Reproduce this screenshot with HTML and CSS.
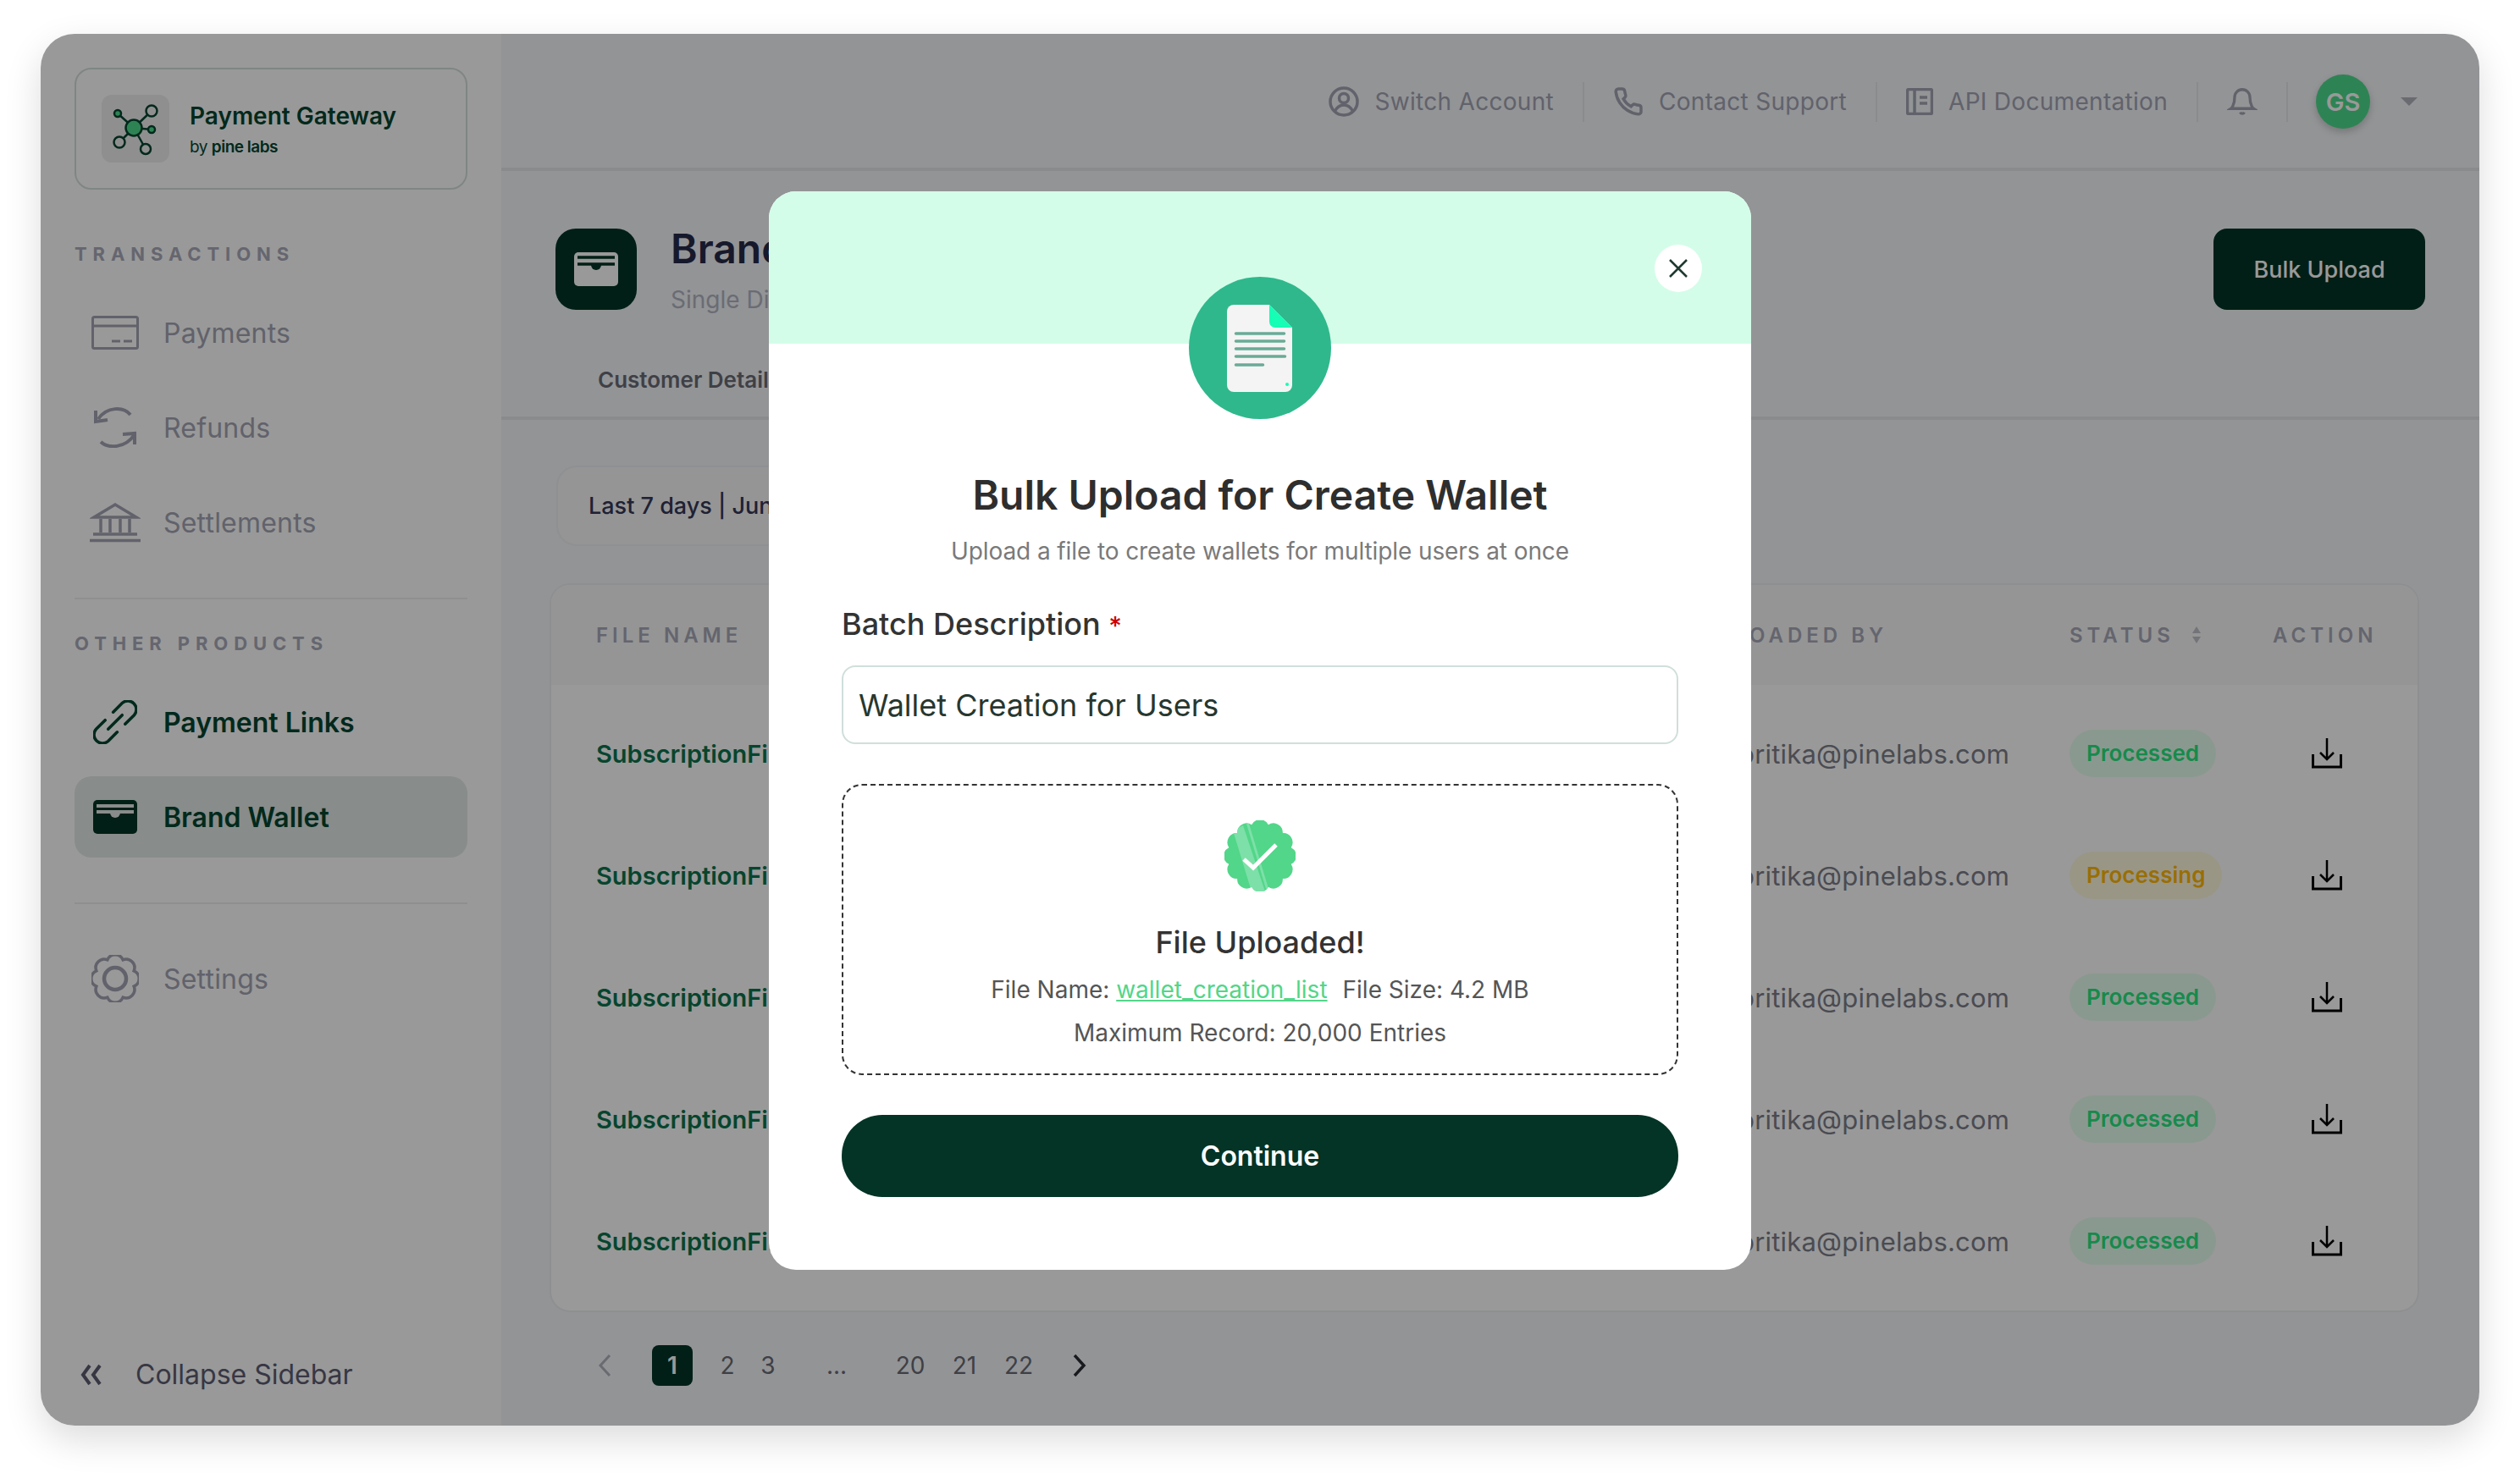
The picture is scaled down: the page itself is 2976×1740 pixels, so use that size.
FILE: index.html
```html
<!DOCTYPE html>
<html lang="en">
<head>
  <meta charset="UTF-8">
  <title>Brand Wallet - Payment Gateway</title>
  <link rel="stylesheet" href="styles.css">
</head>
<body>
  <div class="frame">
    <aside class="sidebar">
      <div class="logo-card">
        <div class="logo-box">
          <svg width="80" height="80" viewBox="0 0 80 80" fill="none" stroke="#034530" stroke-width="2.5">
            <path d="M38 39 19 22M38 39 59 19M38 39 59 41M38 39 21 56M38 39 52 64" />
            <circle cx="38" cy="39" r="9.5" fill="#4eda8c" />
            <circle cx="19" cy="22" r="4" fill="#4eda8c" />
            <circle cx="59" cy="19" r="6.5" fill="#eee" />
            <circle cx="59" cy="41" r="4" fill="#4eda8c" />
            <circle cx="21" cy="56" r="6.5" fill="#eee" />
            <circle cx="52" cy="64" r="6" fill="#eee" />
          </svg>
        </div>
        <div>
          <div class="logo-title">Payment Gateway</div>
          <div class="logo-sub">by <b>pine labs</b></div>
        </div>
      </div>

      <div class="nav-label nav-label-first">TRANSACTIONS</div>
      <a class="nav-item">
        <span class="nav-icon">
          <svg width="56" height="40" viewBox="0 0 56 40" fill="none" stroke="currentColor" stroke-width="3">
            <rect x="1.5" y="1.5" width="53" height="37" rx="2" />
            <path d="M2 12h52" />
            <path d="M24 30h10M38 30h10" />
          </svg>
        </span>
        Payments
      </a>
      <a class="nav-item">
        <span class="nav-icon">
          <svg width="52" height="48" viewBox="0 0 52 48" fill="none" stroke="currentColor" stroke-width="4">
            <path d="M44 9C36-1 16-1 6 14" />
            <path d="M3 4v13l14-2" />
            <path d="M9 41c9 8 29 8 40-9" />
            <path d="M49 44V31l-14 1" />
          </svg>
        </span>
        Refunds
      </a>
      <a class="nav-item">
        <span class="nav-icon">
          <svg width="60" height="48" viewBox="0 0 60 48" fill="none" stroke="currentColor" stroke-width="3.5">
            <path d="M5 18 30 3l25 15z" />
            <path d="M13 20v16M24 20v16M36 20v16M47 20v16" />
            <path d="M4 38h52" />
            <path d="M0 45.5h60" />
          </svg>
        </span>
        Settlements
      </a>

      <div class="nav-line"></div>

      <div class="nav-label">OTHER PRODUCTS</div>
      <a class="nav-item nav-item-dark">
        <span class="nav-icon">
          <svg width="52" height="52" viewBox="4 4 44 44" fill="none" stroke="currentColor" stroke-width="3" stroke-linecap="round">
            <path d="M19 33 33 19" />
            <path d="M24 16 33 7a8.5 8.5 0 0 1 12 12L36 28" />
            <path d="M28 36 19 45A8.5 8.5 0 0 1 7 33l9-9" />
          </svg>
        </span>
        Payment Links
      </a>
      <a class="nav-item nav-item-dark nav-item-active">
        <span class="nav-icon">
          <svg width="52" height="40" viewBox="0 0 52 40">
            <rect width="52" height="40" rx="5" fill="#033426" />
            <path d="M4 7h44M4 14h44" fill="none" stroke="#e3eae6" stroke-width="4" />
            <path d="M20 15a6 6 0 0 0 12 0z" fill="#e3eae6" />
          </svg>
        </span>
        Brand Wallet
      </a>

      <div class="nav-line nav-line-second"></div>

      <a class="nav-item">
        <span class="nav-icon">
          <svg width="56" height="56" viewBox="0 0 56 56" fill="none" stroke="currentColor" stroke-width="3.5">
            <path d="M50.17 37.18A10 10 0 0 1 37.18 50.17 10 10 0 0 1 18.82 50.17 10 10 0 0 1 5.83 37.18 10 10 0 0 1 5.83 18.82 10 10 0 0 1 18.82 5.83 10 10 0 0 1 37.18 5.83 10 10 0 0 1 50.17 18.82 10 10 0 0 1 50.17 37.18z" />
            <circle cx="28" cy="28" r="13" stroke-width="4.5" />
          </svg>
        </span>
        Settings
      </a>

      <div class="collapse">
        <svg width="26" height="26" viewBox="0 0 26 26" fill="none" stroke="currentColor" stroke-width="4">
          <path d="M12 2 4 13l8 11M24 2l-8 11 8 11" />
        </svg>
        Collapse Sidebar
      </div>
    </aside>

    <main class="main">
      <header class="topbar">
        <div class="top-item">
          <svg width="36" height="36" viewBox="0 0 36 36" fill="none" stroke="currentColor" stroke-width="3.5">
            <circle cx="18" cy="18" r="16" />
            <circle cx="18" cy="14" r="5.5" />
            <path d="M7 30c3-6 7-8 11-8s8 2 11 8" />
          </svg>
          Switch Account
        </div>
        <div class="top-item">
          <svg width="36" height="36" viewBox="0 0 24 24" fill="none" stroke="currentColor" stroke-width="2.3">
            <path d="M22 16.92v3a2 2 0 0 1-2.18 2 19.79 19.79 0 0 1-8.63-3.07 19.5 19.5 0 0 1-6-6 19.79 19.79 0 0 1-3.07-8.67A2 2 0 0 1 4.11 2h3a2 2 0 0 1 2 1.72 12.84 12.84 0 0 0 .7 2.81 2 2 0 0 1-.45 2.11L8.09 9.91a16 16 0 0 0 6 6l1.27-1.27a2 2 0 0 1 2.11-.45 12.84 12.84 0 0 0 2.81.7A2 2 0 0 1 22 16.92z" />
          </svg>
          Contact Support
        </div>
        <div class="top-item">
          <svg width="32" height="32" viewBox="0 0 32 32" fill="none" stroke="currentColor" stroke-width="3.5">
            <rect x="1.5" y="1.5" width="29" height="29" rx="2" />
            <path d="M10 2v28" />
            <path d="M16 11h9M16 18h9" />
          </svg>
          API Documentation
        </div>
        <div class="top-item">
          <svg width="36" height="38" viewBox="0 0 24 25" fill="none" stroke="currentColor" stroke-width="2.2">
            <path d="M18 9A6 6 0 0 0 6 9c0 7-3 9-3 9h18s-3-2-3-9" />
            <path d="M13.7 21a2 2 0 0 1-3.4 0" />
          </svg>
        </div>
        <div class="top-user">
          <div class="avatar">GS</div>
          <span class="caret"></span>
        </div>
      </header>

      <section class="page-head">
        <div class="head-icon">
          <svg width="52" height="40" viewBox="0 0 52 40">
            <rect width="52" height="40" rx="5" fill="#fff" />
            <path d="M4 6h44M4 14h44" fill="none" stroke="#033426" stroke-width="3.5" />
            <path d="M20 15a6 6 0 0 0 12 0z" fill="#033426" />
          </svg>
        </div>
        <div class="head-text">
          <h1>Brand Wallet</h1>
          <p>Single Disbursement</p>
        </div>
        <button class="bulk-btn">Bulk Upload</button>
      </section>

      <nav class="tabs"><span class="tab">Customer Details</span></nav>

      <div class="filter">Last 7 days | Jun 1 - Jun 7</div>

      <div class="table">
        <div class="table-row table-head">
          <div>FILE NAME</div>
          <div>UPLOADED BY</div>
          <div class="status-head">STATUS
            <svg width="12" height="22" viewBox="0 0 12 22" fill="#c0c2cc"><path d="M6 1l5 8H1zM6 21l-5-8h10z" /></svg>
          </div>
          <div>ACTION</div>
        </div>
        <div class="table-body">
          <div class="table-row">
            <div class="file-name">SubscriptionFile_01.csv</div>
            <div class="email">pritika@pinelabs.com</div>
            <div><span class="pill">Processed</span></div>
            <div class="action"><svg width="36" height="36" viewBox="0 0 36 36" fill="none" stroke="#000" stroke-width="2.5"><path d="M18 0v25M10 17l8 8 8-8" /><path d="M1.5 19v15h33V19" stroke-width="3" /></svg></div>
          </div>
          <div class="table-row">
            <div class="file-name">SubscriptionFile_02.csv</div>
            <div class="email">pritika@pinelabs.com</div>
            <div><span class="pill pill-wait">Processing</span></div>
            <div class="action"><svg width="36" height="36" viewBox="0 0 36 36" fill="none" stroke="#000" stroke-width="2.5"><path d="M18 0v25M10 17l8 8 8-8" /><path d="M1.5 19v15h33V19" stroke-width="3" /></svg></div>
          </div>
          <div class="table-row">
            <div class="file-name">SubscriptionFile_03.csv</div>
            <div class="email">pritika@pinelabs.com</div>
            <div><span class="pill">Processed</span></div>
            <div class="action"><svg width="36" height="36" viewBox="0 0 36 36" fill="none" stroke="#000" stroke-width="2.5"><path d="M18 0v25M10 17l8 8 8-8" /><path d="M1.5 19v15h33V19" stroke-width="3" /></svg></div>
          </div>
          <div class="table-row">
            <div class="file-name">SubscriptionFile_04.csv</div>
            <div class="email">pritika@pinelabs.com</div>
            <div><span class="pill">Processed</span></div>
            <div class="action"><svg width="36" height="36" viewBox="0 0 36 36" fill="none" stroke="#000" stroke-width="2.5"><path d="M18 0v25M10 17l8 8 8-8" /><path d="M1.5 19v15h33V19" stroke-width="3" /></svg></div>
          </div>
          <div class="table-row">
            <div class="file-name">SubscriptionFile_05.csv</div>
            <div class="email">pritika@pinelabs.com</div>
            <div><span class="pill">Processed</span></div>
            <div class="action"><svg width="36" height="36" viewBox="0 0 36 36" fill="none" stroke="#000" stroke-width="2.5"><path d="M18 0v25M10 17l8 8 8-8" /><path d="M1.5 19v15h33V19" stroke-width="3" /></svg></div>
          </div>
        </div>
      </div>

      <div class="pager">
        <svg class="pager-prev" width="16" height="28" viewBox="0 0 16 28" fill="none" stroke="#b0b2bd" stroke-width="3"><path d="M14 2 3 14l11 12" /></svg>
        <span class="page page-on">1</span>
        <span class="page page-two">2</span>
        <span class="page">3</span>
        <span class="page page-dots">...</span>
        <span class="page page-twenty">20</span>
        <span class="page page-far">21</span>
        <span class="page page-far">22</span>
        <svg class="pager-next" width="16" height="28" viewBox="0 0 16 28" fill="none" stroke="#2a2b33" stroke-width="3.5"><path d="M2 2l11 12L2 26" /></svg>
      </div>
    </main>

    <div class="overlay"></div>

    <div class="modal">
      <div class="modal-band">
        <button class="modal-close">
          <svg width="24" height="24" viewBox="0 0 24 24" fill="none" stroke="#1f3a30" stroke-width="2.5"><path d="M2 2l20 20M22 2 2 22" /></svg>
        </button>
      </div>
      <div class="modal-body">
        <div class="doc-circle">
          <svg width="78" height="103" viewBox="0 0 78 103">
            <path d="M8 0h42l27 27v68a8 8 0 0 1-8 8H8a8 8 0 0 1-8-8V8a8 8 0 0 1 8-8z" fill="#f4f4f4" />
            <path d="M50 0l27 27H57a7 7 0 0 1-7-7z" fill="#16fdb5" />
            <path d="M10.5 34h57M10.5 43h57M10.5 52h57M10.5 61h58M10.5 71h32" fill="none" stroke="#6aab96" stroke-width="3.5" stroke-linecap="round" />
            <circle cx="71" cy="94" r="2" fill="#16fdb5" />
          </svg>
        </div>
        <h2 class="modal-title">Bulk Upload for Create Wallet</h2>
        <p class="modal-sub">Upload a file to create wallets for multiple users at once</p>

        <label class="field-label">Batch Description <span class="req">*</span></label>
        <div class="field-input">Wallet Creation for Users</div>

        <div class="drop-box">
          <svg width="84" height="84" viewBox="0 0 84 84">
            <defs>
              <clipPath id="badge-clip">
                <path d="M78.7 51.84A11 11 0 0 1 68.87 68.87 11 11 0 0 1 51.84 78.7 11 11 0 0 1 32.16 78.7 11 11 0 0 1 15.13 68.87 11 11 0 0 1 5.3 51.84 11 11 0 0 1 5.3 32.16 11 11 0 0 1 15.13 15.13 11 11 0 0 1 32.16 5.3 11 11 0 0 1 51.84 5.3 11 11 0 0 1 68.87 15.13 11 11 0 0 1 78.7 32.16 11 11 0 0 1 78.7 51.84z" />
              </clipPath>
            </defs>
            <g clip-path="url(#badge-clip)">
              <rect width="84" height="84" fill="#52d689" />
              <path d="M10 12 22 6l26 78-16 0zM26 4h3l24 80h-3z" fill="#7de0a8" />
            </g>
            <path d="M23 46l11 10 27-27" fill="none" stroke="#fff" stroke-width="5" />
          </svg>
          <div class="drop-title">File Uploaded!</div>
          <div class="drop-line drop-line-first">File Name: <a class="drop-link">wallet_creation_list</a><span class="drop-size">File Size: 4.2 MB</span></div>
          <div class="drop-line">Maximum Record: 20,000 Entries</div>
        </div>

        <button class="continue-btn">Continue</button>
      </div>
    </div>
  </div>
</body>
</html>
```

FILE: styles.css
```css
* {
  box-sizing: border-box;
}
body {
  height: 1740px;
  margin: 0;
  padding: 40px 48px;
  overflow: hidden;
  background: #fff;
  font-family: Inter, "Noto Sans", sans-serif;
}
.frame {
  position: relative;
  display: flex;
  width: 2880px;
  height: 1644px;
  border-radius: 40px;
  overflow: hidden;
  background: #f5f7fa;
  box-shadow: 0 16px 44px rgba(0, 0, 0, 0.14);
}

/* sidebar */
.sidebar {
  display: flex;
  flex-direction: column;
  width: 544px;
  flex: none;
  padding: 40px 40px 0;
  background: #fff;
}
.logo-card {
  display: flex;
  align-items: center;
  gap: 24px;
  height: 144px;
  padding-left: 30px;
  border: 2px solid #d4dfdd;
  border-radius: 20px;
}
.logo-box {
  width: 80px;
  height: 80px;
  border-radius: 12px;
  background: #eee;
}
.logo-title {
  margin-top: 2px;
  font-size: 28px;
  line-height: 36px;
  font-weight: 600;
  color: #034530;
}
.logo-sub {
  margin-top: 6px;
  font-size: 19px;
  line-height: 26px;
  letter-spacing: -0.5px;
  color: #034530;
}
.logo-sub b {
  font-weight: 600;
}
.nav-label {
  margin: 0 0 33px;
  font-size: 22px;
  line-height: 24px;
  font-weight: 700;
  letter-spacing: 6.9px;
  color: #a9aab9;
}
.nav-label-first {
  margin-top: 64px;
}
.nav-item {
  display: flex;
  align-items: center;
  height: 96px;
  margin-bottom: 16px;
  font-size: 32px;
  letter-spacing: 0.2px;
  color: #a2a3b2;
  border-radius: 20px;
}
.nav-icon {
  display: flex;
  align-items: center;
  justify-content: center;
  width: 96px;
  margin-right: 9px;
}
.nav-item-dark {
  font-weight: 600;
  letter-spacing: 0;
  color: #034530;
}
.nav-item-active {
  background: #e3eae6;
}
.nav-line {
  height: 2px;
  margin: 25px 0 40px;
  background: #eee;
}
.nav-line-second {
  margin: 37px 0 40px;
}
.collapse {
  display: flex;
  align-items: center;
  gap: 40px;
  margin-top: auto;
  margin-bottom: 41px;
  padding-left: 6px;
  font-size: 32px;
  color: #5c5d72;
}

/* main column */
.main {
  flex: 1;
  min-width: 0;
}
.topbar {
  display: flex;
  align-items: center;
  justify-content: flex-end;
  height: 162px;
  padding: 2px 73px 0 0;
  border-bottom: 4px solid #e6e8eb;
}
.top-item {
  display: flex;
  align-items: center;
  gap: 18px;
  height: 47px;
  padding: 0 34px;
  border-right: 2px solid #e6e8eb;
  font-size: 28px;
  letter-spacing: 0.3px;
  color: #a2a3b2;
}
.top-user {
  display: flex;
  align-items: center;
  gap: 36px;
  padding-left: 33px;
}
.avatar {
  display: flex;
  align-items: center;
  justify-content: center;
  width: 64px;
  height: 64px;
  border-radius: 50%;
  background: #4eda8c;
  box-shadow: 0 4px 10px rgba(0, 0, 0, 0.2);
  font-size: 29px;
  font-weight: 600;
  color: #fff;
}
.caret {
  width: 0;
  height: 0;
  border-left: 10px solid transparent;
  border-right: 10px solid transparent;
  border-top: 10px solid #b0b2bd;
}
.page-head {
  display: flex;
  align-items: center;
  height: 96px;
  margin: 68px 64px 0;
}
.head-icon {
  display: flex;
  align-items: center;
  justify-content: center;
  width: 96px;
  height: 96px;
  border-radius: 24px;
  background: #033426;
}
.head-text {
  margin-left: 40px;
}
.head-text h1 {
  margin: 0;
  font-size: 48px;
  line-height: 56px;
  font-weight: 600;
  color: #262b49;
}
.head-text p {
  margin: 15px 0 0;
  font-size: 28px;
  line-height: 34px;
  color: #b1b4c2;
}
.bulk-btn {
  width: 250px;
  height: 96px;
  margin-left: auto;
  padding-top: 2px;
  border: none;
  border-radius: 16px;
  background: #033426;
  font-family: inherit;
  font-size: 27px;
  font-weight: 500;
  color: #fff;
}
.tabs {
  height: 130px;
  padding: 65px 0 0 114px;
  border-bottom: 4px solid #e6e8eb;
}
.tab {
  font-size: 26px;
  line-height: 36px;
  font-weight: 600;
  color: #696c76;
}
.filter {
  display: flex;
  align-items: center;
  width: 640px;
  height: 95px;
  margin: 54px 0 0 65px;
  padding-left: 36px;
  border: 2px solid #eef0f3;
  border-radius: 24px;
  background: #f8f8f9;
  font-size: 27px;
  font-weight: 500;
  color: #343758;
}

/* table */
.table {
  width: 2208px;
  height: 861px;
  margin: 44px 0 0 57px;
  border: 2px solid #edeff1;
  border-radius: 24px;
  background: #fff;
  overflow: hidden;
}
.table-row {
  display: grid;
  grid-template-columns: 1301px 439px 240px 1fr;
  align-items: center;
  height: 144px;
  padding-left: 53px;
}
.table-head {
  height: 118px;
  background: #f9f9f9;
  font-size: 24px;
  font-weight: 600;
  letter-spacing: 5px;
  color: #a7a9b8;
}
.status-head {
  display: flex;
  align-items: center;
  gap: 20px;
}
.table-body {
  padding-top: 9px;
}
.file-name {
  font-size: 29px;
  font-weight: 600;
  color: #0c744e;
}
.email {
  padding-left: 48px;
  font-size: 31px;
  letter-spacing: 0.2px;
  color: #7c7d89;
}
.pill {
  display: inline-block;
  padding: 0 20px;
  border-radius: 28px;
  background: #e6ffef;
  font-size: 26px;
  line-height: 56px;
  font-weight: 600;
  color: #26e67f;
}
.pill-wait {
  background: #fffbe0;
  color: #ffb808;
}
.action {
  display: flex;
  padding-left: 46px;
}
.pager {
  display: flex;
  align-items: center;
  height: 48px;
  margin: 39px 0 0 114px;
  font-size: 28px;
  color: #696b75;
}
.pager-prev {
  margin-right: 48px;
}
.page {
  width: 48px;
  text-align: center;
}
.page-on {
  height: 48px;
  border-radius: 8px;
  background: #033426;
  font-weight: 600;
  line-height: 48px;
  color: #fff;
}
.page-two {
  margin-left: 17px;
}
.page-dots {
  margin-left: 33px;
}
.page-twenty {
  margin-left: 39px;
}
.page-far {
  margin-left: 16px;
}
.pager-next {
  margin-left: 40px;
}

/* modal */
.overlay {
  position: absolute;
  inset: 0;
  background: rgba(0, 0, 0, 0.4);
}
.modal {
  position: absolute;
  left: 860px;
  top: 186px;
  width: 1160px;
  height: 1274px;
  border-radius: 32px;
  background: #fff;
  overflow: hidden;
}
.modal-band {
  display: flex;
  justify-content: flex-end;
  height: 180px;
  padding: 63px 58px 0 0;
  background: #d4fde9;
}
.modal-close {
  display: flex;
  align-items: center;
  justify-content: center;
  width: 56px;
  height: 56px;
  padding: 0;
  border: none;
  border-radius: 50%;
  background: #fff;
}
.modal-body {
  display: flex;
  flex-direction: column;
  align-items: center;
  padding: 0 86px;
}
.doc-circle {
  display: flex;
  align-items: center;
  justify-content: center;
  width: 168px;
  height: 168px;
  margin-top: -79px;
  border-radius: 50%;
  background: #2fb88c;
}
.modal-title {
  margin: 60px 0 0;
  font-size: 48px;
  line-height: 60px;
  font-weight: 600;
  color: #2e2e2e;
}
.modal-sub {
  margin: 16px 0 0;
  font-size: 28px;
  line-height: 40px;
  letter-spacing: -0.1px;
  color: #7a7a7a;
}
.field-label {
  align-self: flex-start;
  margin-top: 44px;
  font-size: 36px;
  line-height: 44px;
  font-weight: 500;
  color: #333;
}
.req {
  font-size: 30px;
  color: #cc0000;
}
.field-input {
  display: flex;
  align-items: center;
  width: 100%;
  height: 93px;
  margin-top: 25px;
  padding-left: 18px;
  border: 2px solid #d0dfdb;
  border-radius: 16px;
  font-size: 36px;
  color: #27372f;
}
.drop-box {
  display: flex;
  flex-direction: column;
  align-items: center;
  width: 100%;
  height: 344px;
  margin-top: 47px;
  padding-top: 41px;
  border: 2px dashed #333;
  border-radius: 24px;
}
.drop-title {
  margin-top: 38px;
  font-size: 36px;
  line-height: 44px;
  font-weight: 500;
  color: #333;
}
.drop-line {
  margin-top: 11px;
  font-size: 28px;
  line-height: 40px;
  color: #555;
}
.drop-line-first {
  margin-top: 14px;
}
.drop-link {
  color: #52d689;
  text-decoration: underline;
}
.drop-size {
  margin-left: 18px;
}
.continue-btn {
  width: 100%;
  height: 97px;
  margin-top: 47px;
  border: none;
  border-radius: 48px;
  background: #033426;
  font-family: inherit;
  font-size: 32px;
  font-weight: 600;
  color: #fff;
}
```
